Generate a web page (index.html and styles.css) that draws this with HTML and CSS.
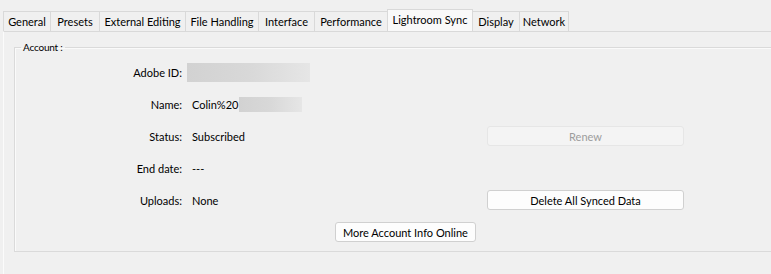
FILE: index.html
```html
<!DOCTYPE html>
<html>
<head>
<meta charset="utf-8">
<link rel="stylesheet" href="styles.css">
</head>
<body>
<div class="tabs">
  <div class="tab w-general">General</div>
  <div class="tab w-presets">Presets</div>
  <div class="tab w-external">External Editing</div>
  <div class="tab w-file">File Handling</div>
  <div class="tab w-interface">Interface</div>
  <div class="tab w-performance">Performance</div>
  <div class="tab active w-sync">Lightroom Sync</div>
  <div class="tab w-display">Display</div>
  <div class="tab w-network">Network</div>
</div>
<div class="panel">
  <fieldset class="group">
    <legend class="legend">Account :</legend>
    <div class="grid">
      <div class="label">Adobe ID:</div>
      <div class="value"><span class="redact redact-id"></span></div>
      <div class="side"></div>

      <div class="label">Name:</div>
      <div class="value">Colin%20<span class="redact redact-name"></span></div>
      <div class="side"></div>

      <div class="label">Status:</div>
      <div class="value">Subscribed</div>
      <div class="side"><button class="btn disabled">Renew</button></div>

      <div class="label">End date:</div>
      <div class="value">---</div>
      <div class="side"></div>

      <div class="label">Uploads:</div>
      <div class="value">None</div>
      <div class="side"><button class="btn wide">Delete All Synced Data</button></div>
    </div>
    <div class="bottom">
      <button class="btn">More Account Info Online</button>
    </div>
  </fieldset>
</div>
</body>
</html>
```

FILE: styles.css
```css
html, body {
  margin: 0;
  padding: 0;
  background: #f0f0f0;
  font-family: Lato, "Noto Sans", sans-serif;
  font-size: 11px;
  color: #000;
  overflow: hidden;
}

.tabs {
  display: flex;
  align-items: flex-end;
  height: 31px;
  padding-left: 3px;
}

.tab {
  height: 20px;
  line-height: 19px;
  border: 1px solid #d9d9d9;
  border-bottom: none;
  border-right: none;
  box-sizing: border-box;
  white-space: nowrap;
  text-align: center;
  background: #f0f0f0;
}

.w-general { width: 47px; }
.w-presets { width: 49px; }
.w-external { width: 86px; }
.w-file { width: 73px; }
.w-interface { width: 56px; }
.w-performance { width: 73px; }
.w-sync { width: 86px; }
.w-display { width: 46px; }
.w-network { width: 50px; }

.tab:last-child {
  border-right: 1px solid #d9d9d9;
}

.tab.active {
  height: 22px;
  line-height: 20px;
  background: #f9f9f9;
  border-right: 1px solid #d9d9d9;
}

.tab.active + .tab {
  border-left: none;
}

.panel {
  margin-left: 3px;
  border-top: 1px solid #d9d9d9;
  border-left: 1px solid #fbfbfb;
  padding: 10px 0 0 10px;
  height: 243px;
  box-sizing: border-box;
}

.group {
  margin: 0;
  padding: 0 0 8px 0;
  border: 1px solid #dadada;
  border-right: none;
  box-shadow: inset 1px 1px 0 #fafafa;
  height: 210px;
  box-sizing: border-box;
}

.legend {
  margin-left: 6px;
  padding: 0 2px;
  font-size: 10px;
  line-height: 10px;
  letter-spacing: -0.2px;
}

.grid {
  display: grid;
  grid-template-columns: 167px 305px 197px;
  grid-auto-rows: 32px;
  margin-top: 4px;
}

.label {
  text-align: right;
  align-self: center;
  white-space: nowrap;
}

.value {
  padding-left: 10px;
  align-self: center;
  display: flex;
  align-items: center;
  white-space: nowrap;
}

.side {
  align-self: center;
  display: flex;
}

.redact {
  display: inline-block;
  background: linear-gradient(90deg, #d2d2d2 0%, #d8d8d8 50%, #e6e6e6 100%);
}

.redact-id {
  width: 123px;
  height: 19px;
  margin-left: -5px;
}

.redact-name {
  width: 63px;
  height: 15px;
  margin-left: 1px;
}

.btn {
  font: inherit;
  color: #000;
  background: #fdfdfd;
  border: 1px solid #d0d0d0;
  border-radius: 3px;
  height: 20px;
  padding: 0 7px;
  line-height: 17px;
  white-space: nowrap;
}

.side .btn {
  width: 197px;
}

.btn.disabled {
  background: #f4f4f4;
  border-color: #e6e6e6;
  color: #9d9d9d;
}

.bottom {
  display: flex;
  padding-left: 320px;
  margin-top: 6px;
}
```
